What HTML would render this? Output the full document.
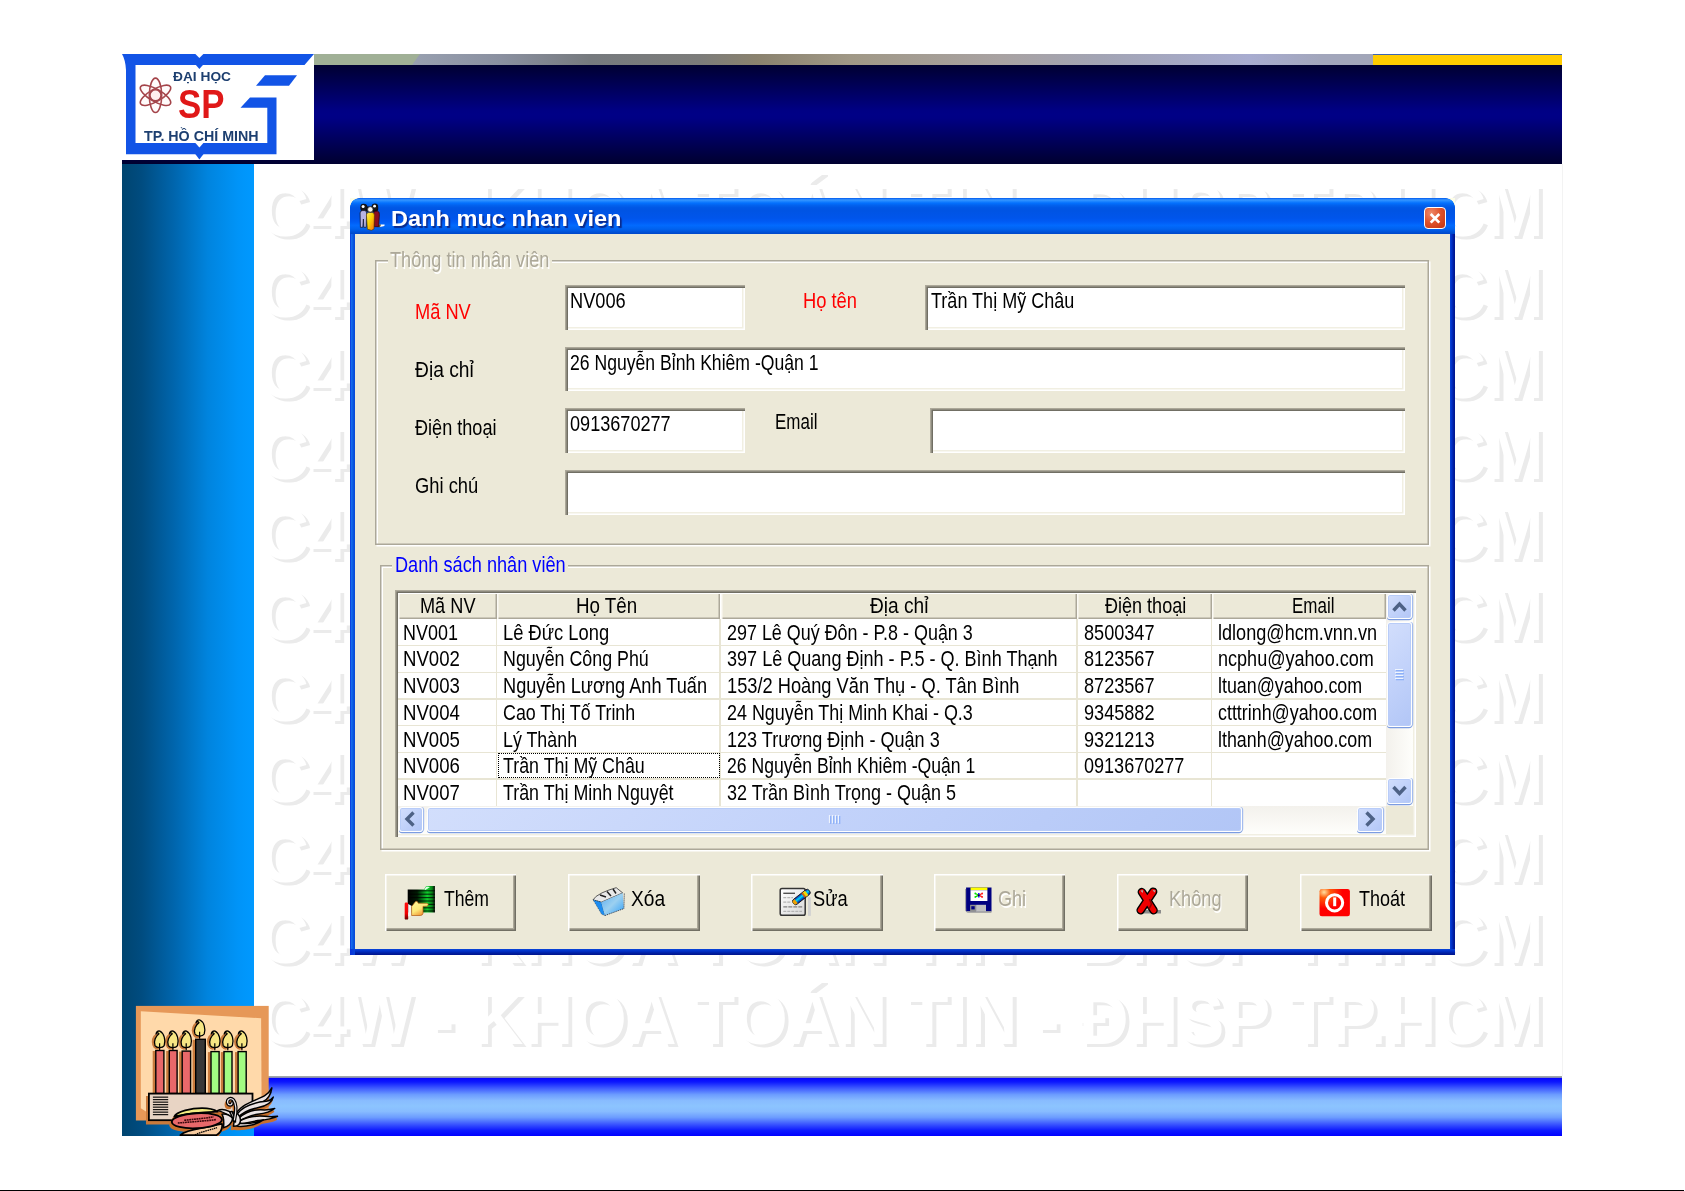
<!DOCTYPE html>
<html lang="vi"><head><meta charset="utf-8"><title>Danh muc nhan vien</title>
<style>
html,body{margin:0;padding:0;background:#fff;}
body{width:1685px;height:1191px;position:relative;overflow:hidden;font-family:"Liberation Sans",sans-serif;}
.a{position:absolute;}
.txt{position:absolute;left:0;top:0;width:1685px;height:1191px;will-change:transform;}
.t{position:absolute;white-space:nowrap;transform-origin:0 0;display:block;}
.wm{position:absolute;left:259px;white-space:nowrap;transform-origin:0 0;font-size:72px;line-height:72px;color:#fff;font-weight:bold;text-shadow:4px 3px 0 #ebebeb;font-family:"Liberation Sans",sans-serif;}
.tb{position:absolute;background:#fff;box-shadow:inset 1.5px 1.5px 0 #aca899,inset 3px 3px 0 #716f64,inset -1.5px -1.5px 0 #fff,inset -3px -3px 0 #f1efe2;}
.gb{position:absolute;box-shadow:inset 0 0 0 1.5px #aca899,inset 3px 3px 0 0 #fff,1.5px 1.5px 0 0 #fff;}
.btn{position:absolute;background:#ece9d8;box-shadow:inset 1.5px 1.5px 0 #fff,inset -1.5px -1.5px 0 #716f64,inset -3px -3px 0 #aca899;}
.hc{position:absolute;top:593.5px;height:25.8px;background:#ece9d8;box-shadow:inset 1.5px 0 0 #fbfaf4,inset -1.5px -1.5px 0 #aca899;}
.vl{position:absolute;top:619.3px;width:1.5px;height:186.5px;background:#e8e5d4;}
.hl{position:absolute;left:398px;width:988px;height:1.5px;background:#e8e5d4;}
.sb{position:absolute;background:linear-gradient(135deg,#d2defc,#c2d2fa 50%,#b2c6f6);border:1px solid #fff;border-radius:3px;box-shadow:inset 0 0 0 1px #b8ccf8, 0 1.3px 0.6px #7c9ce0, 1.2px 0 0.6px #a4bcee;box-sizing:border-box;}
</style></head>
<body>

<!-- top strip -->
<div class="a" style="left:412px;top:54px;width:961px;height:11px;background:linear-gradient(to right,#98a0b0 0.0%,#8a90a0 9.2%,#767a7e 18.5%,#7c7c7a 30.0%,#8a826e 35.9%,#a09886 45.6%,#a8a2a2 61.2%,#a2a4b4 71.6%,#a8acd0 87.2%,#a2a6bc 94.5%,#a2a6b8 100.0%);"></div>
<svg class="a" style="left:314px;top:54px" width="110" height="11" viewBox="0 0 110 11"><path d="M0 0 H106 L98 11 H0 Z" fill="#a0b096"/></svg>
<div class="a" style="left:1373px;top:54px;width:189px;height:11px;background:#ffcc00;border-top:1px solid #3c64b4;box-sizing:border-box;"></div>
<!-- navy header band -->
<div class="a" style="left:122px;top:65px;width:1440px;height:99px;background:linear-gradient(to bottom,#000032 0%,#00003c 6%,#000084 46%,#000086 50%,#000084 54%,#00003a 94%,#000030 100%);"></div>
<!-- left sidebar -->
<div class="a" style="left:122px;top:164px;width:132px;height:972px;background:linear-gradient(to right,#00446f 0%,#004c80 15%,#0066ae 40%,#0084de 65%,#0094f8 88%,#0099ff 100%);"></div>
<!-- bottom bar -->
<div class="a" style="left:254px;top:1076px;width:1308px;height:60px;background:linear-gradient(to bottom,#a0a6aa 0%,#a0a6aa 2.2%,#0404ff 4%,#0c18ff 10%,#3c58ff 20%,#6c9cff 31%,#88bcff 41%,#8cc4ff 50%,#88bcff 59%,#6c9cff 69%,#3c58ff 80%,#0c18ff 91%,#0000ff 100%);"></div>
<div class="a" style="left:1562px;top:164px;width:1px;height:912px;background:#f3f3f3;"></div>
<!-- bottom black rule -->
<div class="a" style="left:0;top:1189.5px;width:1684px;height:1.5px;background:#000;"></div>

<svg class="a" style="left:122px;top:54px" width="192" height="106" viewBox="122 54 192 106">
<rect x="122" y="54" width="192" height="106" fill="#fff"/>
<g fill="#1254e6">
<path d="M122 54 L314 54 L304.5 65 L135.5 65 L135.5 143 L267.3 143 L267.3 107.8 L240.5 107.8 L250 97.4 L276.5 97.4 L276.5 154.2 L126 154.2 L126 70 Q125.5 60 122 54 Z"/>
<path d="M265 75.2 L297 75.2 L289 85.7 L256 85.7 Z"/>
<path d="M195 64 L199.4 69 L203.8 64 Z"/>
<path d="M194.5 153 L199.4 159.5 L204.3 153 Z"/>
</g>
<path d="M195.4 54 L199.4 58 L203.4 54 Z" fill="#fff"/>
<path d="M195.4 143 L199.4 147.5 L203.4 143 Z" fill="#fff"/>
<g fill="rgba(255,200,200,0.07)" stroke="#a4444a" stroke-width="1.6">
<ellipse cx="155.5" cy="95.3" rx="6.2" ry="17.2"/>
<ellipse cx="155.5" cy="95.3" rx="6.2" ry="17.2" transform="rotate(60 155.5 95.3)"/>
<ellipse cx="155.5" cy="95.3" rx="6.2" ry="17.2" transform="rotate(-60 155.5 95.3)"/>
<circle cx="155.5" cy="95.3" r="5.6"/>
</g>
</svg>
<div class="wm" style="top:175.4px;transform:scaleX(0.9576);">C4W - KHOA TOÁN TIN - ĐHSP TP.HCM</div>
<div class="wm" style="top:256.1px;transform:scaleX(0.9576);">C4W - KHOA TOÁN TIN - ĐHSP TP.HCM</div>
<div class="wm" style="top:336.8px;transform:scaleX(0.9576);">C4W - KHOA TOÁN TIN - ĐHSP TP.HCM</div>
<div class="wm" style="top:417.5px;transform:scaleX(0.9576);">C4W - KHOA TOÁN TIN - ĐHSP TP.HCM</div>
<div class="wm" style="top:498.3px;transform:scaleX(0.9576);">C4W - KHOA TOÁN TIN - ĐHSP TP.HCM</div>
<div class="wm" style="top:579.0px;transform:scaleX(0.9576);">C4W - KHOA TOÁN TIN - ĐHSP TP.HCM</div>
<div class="wm" style="top:659.7px;transform:scaleX(0.9576);">C4W - KHOA TOÁN TIN - ĐHSP TP.HCM</div>
<div class="wm" style="top:740.5px;transform:scaleX(0.9576);">C4W - KHOA TOÁN TIN - ĐHSP TP.HCM</div>
<div class="wm" style="top:821.2px;transform:scaleX(0.9576);">C4W - KHOA TOÁN TIN - ĐHSP TP.HCM</div>
<div class="wm" style="top:901.9px;transform:scaleX(0.9576);">C4W - KHOA TOÁN TIN - ĐHSP TP.HCM</div>
<div class="wm" style="top:982.7px;transform:scaleX(0.9576);">C4W - KHOA TOÁN TIN - ĐHSP TP.HCM</div>
<svg class="a" style="left:130px;top:1000px" width="160" height="135.8" viewBox="130 1000 160 135.8" ><rect x="135.9" y="1005.9" width="132.8" height="114.6" fill="#e69858"/><path d="M140.8 1011.2 L261.1 1018.2 L261.6 1104 L150 1114 L140.8 1108.2 Z" fill="#ffd9aa"/><path d="M146 1096 H150 V1121 H253 V1124.6 H146 Z" fill="#c87a3c"/><rect x="152.7" y="1051.0" width="3" height="42.5" fill="#c87a3c"/><rect x="155.8" y="1050.5" width="8.1" height="43.0" fill="#e8686a" stroke="#000" stroke-width="1.4"/><rect x="166.2" y="1051.0" width="3" height="42.5" fill="#c87a3c"/><rect x="169.3" y="1050.5" width="7.8" height="43.0" fill="#e8686a" stroke="#000" stroke-width="1.4"/><rect x="179.1" y="1051.6" width="3" height="41.9" fill="#c87a3c"/><rect x="182.2" y="1051.1" width="8.4" height="42.4" fill="#e8686a" stroke="#000" stroke-width="1.4"/><rect x="192.6" y="1039.8" width="3" height="53.7" fill="#c87a3c"/><rect x="195.7" y="1039.3" width="9.6" height="54.2" fill="#383838" stroke="#000" stroke-width="1.4"/><rect x="207.9" y="1052.1" width="3" height="41.4" fill="#c87a3c"/><rect x="211.0" y="1051.6" width="8.1" height="41.9" fill="#a2fb82" stroke="#000" stroke-width="1.4"/><rect x="220.9" y="1052.1" width="3" height="41.4" fill="#c87a3c"/><rect x="224.0" y="1051.6" width="8.0" height="41.9" fill="#a2fb82" stroke="#000" stroke-width="1.4"/><rect x="235.0" y="1052.1" width="3" height="41.4" fill="#c87a3c"/><rect x="238.1" y="1051.6" width="8.1" height="41.9" fill="#a2fb82" stroke="#000" stroke-width="1.4"/><ellipse cx="157.4" cy="1041.7" rx="5.6" ry="8" fill="#c87a3c"/><ellipse cx="170.7" cy="1041.7" rx="5.6" ry="8" fill="#c87a3c"/><ellipse cx="184.0" cy="1041.7" rx="5.6" ry="8" fill="#c87a3c"/><ellipse cx="197.4" cy="1030.3" rx="5.6" ry="8" fill="#c87a3c"/><ellipse cx="212.6" cy="1041.7" rx="5.6" ry="8" fill="#c87a3c"/><ellipse cx="225.6" cy="1041.7" rx="5.6" ry="8" fill="#c87a3c"/><ellipse cx="239.7" cy="1041.7" rx="5.6" ry="8" fill="#c87a3c"/><path d="M159.9 1031.2 C164.1 1033.2 165.9 1040.3 164.2 1045.6 C162.6 1048.4 156.6 1048.4 155.0 1045.6 C153.1 1041.2 156.1 1035.8 159.0 1033.8 C158.0 1032.4 156.8 1032.8 156.0 1034.0 C156.4 1031.4 158.4 1030.6 159.9 1031.2 Z" fill="#f6e684" stroke="#000" stroke-width="1.3" stroke-linejoin="round"/><path d="M159.6 1043.3 V1050.3" stroke="#000" stroke-width="1.2"/><path d="M173.2 1031.2 C177.4 1033.2 179.2 1040.3 177.5 1045.6 C175.9 1048.4 169.9 1048.4 168.3 1045.6 C166.4 1041.2 169.4 1035.8 172.3 1033.8 C171.3 1032.4 170.1 1032.8 169.3 1034.0 C169.7 1031.4 171.7 1030.6 173.2 1031.2 Z" fill="#f6e684" stroke="#000" stroke-width="1.3" stroke-linejoin="round"/><path d="M172.9 1043.3 V1050.3" stroke="#000" stroke-width="1.2"/><path d="M186.5 1031.2 C190.7 1033.2 192.5 1040.3 190.8 1045.6 C189.2 1048.4 183.2 1048.4 181.6 1045.6 C179.7 1041.2 182.7 1035.8 185.6 1033.8 C184.6 1032.4 183.4 1032.8 182.6 1034.0 C183.0 1031.4 185.0 1030.6 186.5 1031.2 Z" fill="#f6e684" stroke="#000" stroke-width="1.3" stroke-linejoin="round"/><path d="M186.2 1043.3 V1050.3" stroke="#000" stroke-width="1.2"/><path d="M199.9 1020.0 C204.1 1022.0 205.9 1028.9 204.2 1034.0 C202.6 1036.8 196.6 1036.8 195.0 1034.0 C193.1 1029.7 196.1 1024.5 199.0 1022.6 C198.0 1021.2 196.8 1021.6 196.0 1022.8 C196.4 1020.2 198.4 1019.4 199.9 1020.0 Z" fill="#f6e684" stroke="#000" stroke-width="1.3" stroke-linejoin="round"/><path d="M199.6 1031.7 V1038.7" stroke="#000" stroke-width="1.2"/><path d="M215.1 1031.2 C219.3 1033.2 221.1 1040.3 219.4 1045.6 C217.8 1048.4 211.8 1048.4 210.2 1045.6 C208.3 1041.2 211.3 1035.8 214.2 1033.8 C213.2 1032.4 212.0 1032.8 211.2 1034.0 C211.6 1031.4 213.6 1030.6 215.1 1031.2 Z" fill="#f6e684" stroke="#000" stroke-width="1.3" stroke-linejoin="round"/><path d="M214.8 1043.3 V1050.3" stroke="#000" stroke-width="1.2"/><path d="M228.1 1031.2 C232.3 1033.2 234.1 1040.3 232.4 1045.6 C230.8 1048.4 224.8 1048.4 223.2 1045.6 C221.3 1041.2 224.3 1035.8 227.2 1033.8 C226.2 1032.4 225.0 1032.8 224.2 1034.0 C224.6 1031.4 226.6 1030.6 228.1 1031.2 Z" fill="#f6e684" stroke="#000" stroke-width="1.3" stroke-linejoin="round"/><path d="M227.8 1043.3 V1050.3" stroke="#000" stroke-width="1.2"/><path d="M242.2 1031.2 C246.4 1033.2 248.2 1040.3 246.5 1045.6 C244.9 1048.4 238.9 1048.4 237.3 1045.6 C235.4 1041.2 238.4 1035.8 241.3 1033.8 C240.3 1032.4 239.1 1032.8 238.3 1034.0 C238.7 1031.4 240.7 1030.6 242.2 1031.2 Z" fill="#f6e684" stroke="#000" stroke-width="1.3" stroke-linejoin="round"/><path d="M241.9 1043.3 V1050.3" stroke="#000" stroke-width="1.2"/><rect x="148.9" y="1093.6" width="103.6" height="26.6" fill="#e8d4c4" stroke="#000" stroke-width="1.8"/><rect x="152.9" y="1096.6" width="15.3" height="1.1" fill="#000"/><rect x="152.9" y="1099.1" width="15.3" height="1.1" fill="#000"/><rect x="152.9" y="1101.6" width="15.3" height="1.1" fill="#000"/><rect x="152.9" y="1104.1" width="15.3" height="1.1" fill="#000"/><rect x="152.9" y="1106.6" width="15.3" height="1.1" fill="#000"/><rect x="152.9" y="1109.1" width="15.3" height="1.1" fill="#000"/><rect x="152.9" y="1111.6" width="15.3" height="1.1" fill="#000"/><rect x="152.9" y="1114.1" width="15.3" height="1.1" fill="#000"/><g transform="translate(165 1080) scale(0.07123)"><g transform="translate(-22 40)" fill="#c8702c" stroke="#c8702c" stroke-width="30" stroke-linejoin="round"><path d="M 1000 470 C 1080 330 1300 280 1400 220 C 1450 190 1480 150 1500 110 C 1490 200 1440 280 1380 300 C 1250 340 1100 400 1010 500 Z"/><path d="M 1000 490 C 1100 350 1300 310 1420 300 C 1470 290 1500 270 1520 240 C 1500 330 1400 370 1300 390 C 1200 410 1080 460 1010 540 Z"/><path d="M 1030 540 C 1150 430 1300 410 1400 420 C 1460 420 1500 410 1540 400 C 1480 450 1380 470 1300 480 C 1200 500 1100 540 1040 580 Z"/><path d="M 1040 580 C 1150 520 1300 500 1400 510 C 1480 520 1540 515 1580 510 C 1500 550 1400 560 1300 570 C 1200 590 1100 610 1050 620 Z"/><path d="M 1000 600 C 1100 620 1250 610 1380 560 C 1300 620 1150 660 1020 650 Z"/><path d="M 930 450 C 1000 440 1050 480 1060 560 C 1060 620 1020 650 960 650 C 980 580 980 520 930 450 Z"/><path d="M 960 480 C 900 420 800 400 735 430 C 800 440 860 470 930 520 Z"/><path d="M 800 480 C 860 470 930 500 950 540 C 940 600 900 650 820 670 C 830 600 830 540 800 480 Z"/><path d="M 940 440 C 960 480 990 540 990 590 L 960 580 C 950 530 930 480 910 450 Z"/><path d="M 130 515 C 160 440 380 395 520 395 C 620 395 700 420 740 445 C 600 450 300 470 130 515 Z"/><path d="M 215 775 C 300 700 450 690 600 660 C 700 640 770 620 800 615 C 810 680 780 740 720 775 Z"/><ellipse cx="447" cy="572" rx="352" ry="105" transform="rotate(-3 447 572)"/><path d="M 975 560 C 1000 450 1000 330 960 280 C 920 240 870 270 880 320 C 890 360 940 360 940 320" fill="none" stroke-width="40"/></g><path d="M 215 775 C 300 700 450 690 600 660 C 700 640 770 620 800 615 C 810 680 780 740 720 775 Z" fill="#f8cca0" stroke="#000" stroke-width="24" stroke-linejoin="round"/><path d="M 420 772 C 520 722 640 702 730 668" fill="none" stroke="#000" stroke-width="18" stroke-dasharray="22 9"/><path d="M 130 515 C 160 440 380 395 520 395 C 620 395 700 420 740 445 C 600 450 300 470 130 515 Z" fill="#f4ec80" stroke="#000" stroke-width="24" stroke-linejoin="round"/><ellipse cx="447" cy="572" rx="352" ry="105" transform="rotate(-3 447 572)" fill="#e8686a" stroke="#000" stroke-width="26"/><path d="M 180 604 C 360 590 560 575 720 556 M 270 566 C 420 550 560 538 680 518" fill="none" stroke="#3a080c" stroke-width="22" stroke-dasharray="26 8"/><path d="M 1000 470 C 1080 330 1300 280 1400 220 C 1450 190 1480 150 1500 110 C 1490 200 1440 280 1380 300 C 1250 340 1100 400 1010 500 Z" fill="#ece4e4" stroke="#000" stroke-width="21" stroke-linejoin="round"/><path d="M 1000 490 C 1100 350 1300 310 1420 300 C 1470 290 1500 270 1520 240 C 1500 330 1400 370 1300 390 C 1200 410 1080 460 1010 540 Z" fill="#ece4e4" stroke="#000" stroke-width="21" stroke-linejoin="round"/><path d="M 1030 540 C 1150 430 1300 410 1400 420 C 1460 420 1500 410 1540 400 C 1480 450 1380 470 1300 480 C 1200 500 1100 540 1040 580 Z" fill="#ece4e4" stroke="#000" stroke-width="21" stroke-linejoin="round"/><path d="M 1040 580 C 1150 520 1300 500 1400 510 C 1480 520 1540 515 1580 510 C 1500 550 1400 560 1300 570 C 1200 590 1100 610 1050 620 Z" fill="#ece4e4" stroke="#000" stroke-width="21" stroke-linejoin="round"/><path d="M 1000 600 C 1100 620 1250 610 1380 560 C 1300 620 1150 660 1020 650 Z" fill="#ece4e4" stroke="#000" stroke-width="21" stroke-linejoin="round"/><path d="M 930 450 C 1000 440 1050 480 1060 560 C 1060 620 1020 650 960 650 C 980 580 980 520 930 450 Z" fill="#ece4e4" stroke="#000" stroke-width="21" stroke-linejoin="round"/><path d="M 960 480 C 900 420 800 400 735 430 C 800 440 860 470 930 520 Z" fill="#ece4e4" stroke="#000" stroke-width="21" stroke-linejoin="round"/><path d="M 800 480 C 860 470 930 500 950 540 C 940 600 900 650 820 670 C 830 600 830 540 800 480 Z" fill="#ece4e4" stroke="#000" stroke-width="21" stroke-linejoin="round"/><path d="M 940 440 C 960 480 990 540 990 590 L 960 580 C 950 530 930 480 910 450 Z" fill="#ece4e4" stroke="#000" stroke-width="21" stroke-linejoin="round"/><path d="M 975 560 C 1000 450 1000 330 960 280 C 920 240 870 270 880 320 C 890 360 940 360 940 320" fill="none" stroke="#000" stroke-width="50" stroke-linecap="round"/><path d="M 975 560 C 1000 450 1000 330 960 280 C 920 240 870 270 880 320 C 890 360 940 360 940 320" fill="none" stroke="#ece4e4" stroke-width="17" stroke-linecap="round"/></g></svg>


<!-- dialog window -->
<div class="a" style="left:350px;top:198px;width:1105px;height:756.5px;background:#ece9d8;"></div>
<div class="a" style="left:350px;top:198px;width:1105px;height:36px;border-radius:9px 9px 0 0;background:linear-gradient(to bottom,#0058ee 0%,#3593ff 5%,#288eff 8%,#127dff 11%,#036ffc 15%,#0262ee 20%,#0057e5 27%,#0054e3 34%,#0055eb 56%,#005bf5 66%,#026afe 76%,#0062ef 86%,#0054dc 93%,#0046c8 100%);"></div>
<div class="a" style="left:350px;top:198px;width:9px;height:9px;background:radial-gradient(circle at 100% 100%,rgba(0,0,0,0) 8.6px,#fdfde6 9px);"></div>
<div class="a" style="left:1446px;top:198px;width:9px;height:9px;background:radial-gradient(circle at 0 100%,rgba(0,0,0,0) 8.6px,#fdfde6 9px);"></div>
<div class="a" style="left:350px;top:234px;width:5px;height:720.5px;background:linear-gradient(to right,#0831d9 0%,#166aee 30%,#0855dd 70%,#0a45d8 100%);"></div>
<div class="a" style="left:1450px;top:234px;width:5px;height:720.5px;background:linear-gradient(to right,#0a45d8 0%,#0030c8 35%,#001ea0 70%,#00138c 100%);"></div>
<div class="a" style="left:350px;top:949px;width:1105px;height:5.5px;background:linear-gradient(to bottom,#0a45d8 0%,#0030c8 35%,#001ea0 70%,#00138c 100%);"></div>
<div class="a" style="left:350px;top:949px;width:5px;height:5.5px;background:linear-gradient(to right,#0831d9,#0a45d8);"></div>
<!-- close button -->
<div class="a" style="left:1423.5px;top:206.5px;width:22px;height:22.5px;box-sizing:border-box;border:1.3px solid #fff;border-radius:4px;background:radial-gradient(circle at 30% 25%,#ee8a6a 0%,#e0532c 45%,#c43210 100%);"></div>
<svg class="a" style="left:1423.5px;top:206.5px" width="22" height="22.5" viewBox="0 0 22 22.5"><path d="M6.7 7 L15.3 15.6 M15.3 7 L6.7 15.6" stroke="#fff" stroke-width="2.7" stroke-linecap="butt"/></svg>
<svg class="a" style="left:356px;top:202px" width="32" height="32" viewBox="356 202 32 32" ><defs><linearGradient id="gy" x1="0" y1="0" x2="1" y2="1"><stop offset="0" stop-color="#f8e870"/><stop offset="0.45" stop-color="#fcd400"/><stop offset="1" stop-color="#f86818"/></linearGradient></defs><path d="M378 225 L381 224.4 L384.6 224.6 L384.4 226 L380 227 Z" fill="#fff"/><path d="M377.5 224.6 L381 224.6 L380 227.2 L377 227 Z" fill="#5a5230"/><path d="M360.4 208 Q360 203.6 363.8 203.8 Q367 204 367.4 206.6 L371.6 206.4 Q372 203.6 375 203.6 Q378.4 203.8 378.2 207.6 Q378.6 211.6 376 212 L362 211.6 Q360.4 211 360.4 208 Z" fill="#0c0c14"/><path d="M360.1 213 Q360 210.8 362.5 210.6 L365 210.6 Q366.8 211 366.6 214 L366.2 227.3 L363.8 227.3 L363.4 219 L362.8 227.3 L360.4 227.3 Z" fill="#b8b4e4" stroke="#101020" stroke-width="0.7"/><circle cx="363.6" cy="207.2" r="2.9" fill="#181818"/><circle cx="363.1" cy="206.6" r="1.5" fill="#fff"/><path d="M373.6 213.4 Q373.6 211.2 375.6 211.2 L377.6 211.2 Q379.6 211.6 379.4 214.6 L378.6 226.7 L374.2 226.7 Z" fill="#8a0c20" stroke="#300008" stroke-width="0.7"/><circle cx="374.9" cy="206.9" r="2.9" fill="#181818"/><circle cx="374.6" cy="206.2" r="1.4" fill="#fff"/><path d="M366.4 215 Q366.4 212.4 369 212.4 L372 212.4 Q374.4 212.6 374.4 215.4 L374 229 L371.4 230.3 L367.4 229.2 Z" fill="url(#gy)" stroke="#503000" stroke-width="0.6"/><circle cx="370.3" cy="209.4" r="2.7" fill="#f4f4f4" stroke="#303030" stroke-width="0.7"/></svg>


<div class="gb" style="left:374.9px;top:260.1px;width:1054.6px;height:284.5px;"></div>
<div class="a" style="left:388px;top:256px;width:164px;height:10px;background:#ece9d8;"></div>
<div class="gb" style="left:379.8px;top:564.7px;width:1049.7px;height:285px;"></div>
<div class="a" style="left:392px;top:560px;width:176px;height:10px;background:#ece9d8;"></div>

<div class="tb" style="left:565px;top:285.4px;width:180.3px;height:44.4px;"></div>
<div class="tb" style="left:925px;top:285.4px;width:479.5px;height:44.4px;"></div>
<div class="tb" style="left:565px;top:346.7px;width:839.5px;height:44.2px;"></div>
<div class="tb" style="left:565px;top:408.3px;width:180.3px;height:44.4px;"></div>
<div class="tb" style="left:930px;top:408.3px;width:475px;height:45px;"></div>
<div class="tb" style="left:565px;top:470px;width:839.5px;height:44.6px;"></div>

<div class="tb" style="left:395px;top:590.4px;width:1021.3px;height:246.2px;"></div>
<div class="hc" style="left:398px;width:98.7px;"></div>
<div class="hc" style="left:496.7px;width:223.8px;"></div>
<div class="hc" style="left:720.5px;width:356.8px;"></div>
<div class="hc" style="left:1077.3px;width:134.7px;"></div>
<div class="hc" style="left:1212px;width:174px;"></div>
<div class="vl" style="left:495.5px;"></div><div class="vl" style="left:719.3px;"></div><div class="vl" style="left:1076.1px;"></div><div class="vl" style="left:1210.8px;"></div><div class="hl" style="top:644.85px;"></div><div class="hl" style="top:671.55px;"></div><div class="hl" style="top:698.25px;"></div><div class="hl" style="top:724.95px;"></div><div class="hl" style="top:751.65px;"></div><div class="hl" style="top:778.35px;"></div>
<!-- focus rect -->
<div class="a" style="left:498px;top:753px;width:221.5px;height:24.5px;box-sizing:border-box;border:1.5px dotted #000;"></div>
<!-- scrollbars -->
<div class="a" style="left:1385.5px;top:593.5px;width:27.8px;height:212.5px;background:linear-gradient(to right,#f3f1ec,#fefefb);"></div>
<div class="a" style="left:398px;top:805.6px;width:987.5px;height:28.6px;background:linear-gradient(to bottom,#f3f1ec,#fefefb);"></div>
<div class="a" style="left:1385.5px;top:805.6px;width:27.8px;height:28.6px;background:#ece9d8;"></div>
<div class="sb" style="left:1386.6px;top:594px;width:25.4px;height:24.5px;"></div>
<div class="sb" style="left:1386.6px;top:622px;width:25.4px;height:105px;"></div>
<div class="sb" style="left:1386.6px;top:778px;width:25.4px;height:25.5px;"></div>
<div class="sb" style="left:398.5px;top:807px;width:24px;height:25px;"></div>
<div class="sb" style="left:427px;top:807px;width:814.5px;height:25px;"></div>
<div class="sb" style="left:1357px;top:807px;width:25.5px;height:25px;"></div>
<svg class="a" style="left:1386px;top:593px" width="27" height="241" viewBox="0 0 27 241" fill="none" stroke="#4d6185" stroke-width="3.4" stroke-linecap="butt" stroke-linejoin="miter">
<path d="M7.5 17.5 L13.5 11 L19.5 17.5"/>
<path d="M7.5 194 L13.5 200.5 L19.5 194"/>
<g stroke="#eef4fe" stroke-width="1.2"><path d="M9 76.5 H17 M9 79.5 H17 M9 82.5 H17 M9 85.5 H17"/></g>
<g stroke="#8cb0f8" stroke-width="1.2"><path d="M10 77.7 H18 M10 80.7 H18 M10 83.7 H18 M10 86.7 H18"/></g>
</svg>
<svg class="a" style="left:398px;top:806px" width="988" height="28" viewBox="0 0 988 28" fill="none" stroke="#4d6185" stroke-width="3.4">
<path d="M15.5 6.5 L9 13 L15.5 19.5"/>
<path d="M968.5 6.5 L975 13 L968.5 19.5"/>
<g stroke="#eef4fe" stroke-width="1.2"><path d="M431.5 9 V17 M434.5 9 V17 M437.5 9 V17 M440.5 9 V17"/></g>
<g stroke="#8cb0f8" stroke-width="1.2"><path d="M432.7 10 V18 M435.7 10 V18 M438.7 10 V18 M441.7 10 V18"/></g>
</svg>
<div class="btn" style="left:384.5px;top:874.2px;width:131.8px;height:57px;"></div>
<div class="btn" style="left:567.8px;top:874.2px;width:131.8px;height:57px;"></div>
<div class="btn" style="left:751.3px;top:874.2px;width:131.8px;height:57px;"></div>
<div class="btn" style="left:933.5px;top:874.2px;width:131.8px;height:57px;"></div>
<div class="btn" style="left:1116.5px;top:874.2px;width:131.8px;height:57px;"></div>
<div class="btn" style="left:1299.8px;top:874.2px;width:131.8px;height:57px;"></div>
<svg class="a" style="left:400px;top:880px" width="960" height="44" viewBox="400 880 960 44" ><defs><linearGradient id="gg" x1="0" y1="0" x2="1" y2="0"><stop offset="0" stop-color="#000"/><stop offset="0.35" stop-color="#001c04"/><stop offset="0.72" stop-color="#0ed02c"/><stop offset="0.9" stop-color="#088018"/><stop offset="1" stop-color="#000"/></linearGradient><linearGradient id="gh" x1="0" y1="0" x2="0.6" y2="1"><stop offset="0" stop-color="#fff89a"/><stop offset="0.6" stop-color="#fce878"/><stop offset="1" stop-color="#f09030"/></linearGradient><linearGradient id="gr" x1="0" y1="0" x2="0" y2="1"><stop offset="0" stop-color="#ff1010"/><stop offset="0.65" stop-color="#f00000"/><stop offset="1" stop-color="#600000"/></linearGradient><linearGradient id="gb" x1="0" y1="0" x2="1" y2="1"><stop offset="0" stop-color="#58acf0"/><stop offset="0.5" stop-color="#9cd0f0"/><stop offset="1" stop-color="#30a0f8"/></linearGradient><linearGradient id="gp" x1="0" y1="0" x2="1" y2="1"><stop offset="0" stop-color="#fff"/><stop offset="1" stop-color="#d8d8d8"/></linearGradient><linearGradient id="gpen" x1="0" y1="0" x2="0" y2="1"><stop offset="0" stop-color="#0818b0"/><stop offset="0.45" stop-color="#00d8f8"/><stop offset="1" stop-color="#0010a0"/></linearGradient><radialGradient id="gx" cx="0.15" cy="0.12" r="0.6"><stop offset="0" stop-color="#ffe0a0"/><stop offset="0.35" stop-color="#ff5808"/><stop offset="1" stop-color="#ff0000"/></radialGradient></defs><path d="M407.7 889.5 H424 L426.2 885.9 H434.9 V912.6 H407.7 Z" fill="url(#gg)"/><path d="M409 890.8 H435" stroke="#000" stroke-width="1.1" opacity="0.75"/><path d="M409 894.2 H435" stroke="#000" stroke-width="1.1" opacity="0.75"/><path d="M409 897.6 H435" stroke="#000" stroke-width="1.1" opacity="0.75"/><path d="M409 901.0 H435" stroke="#000" stroke-width="1.1" opacity="0.75"/><path d="M409 904.4 H435" stroke="#000" stroke-width="1.1" opacity="0.75"/><path d="M409 907.8 H435" stroke="#000" stroke-width="1.1" opacity="0.75"/><path d="M409 911.0 H435" stroke="#000" stroke-width="1.1" opacity="0.75"/><path d="M424.2 889.6 L426.4 886.4 L430 887 L425.5 890 Z" fill="#d8ffe0"/><rect x="404.7" y="902.6" width="3.5" height="17" rx="1.2" fill="url(#gr)"/><path d="M408.2 904 L411.8 906 L411.8 915 L408.2 916.5 Z" fill="#f4f4f4"/><path d="M411.6 906.5 L415.5 901.6 Q417 900.8 417.8 902.2 L418.3 903.2 L427 903.2 Q428.2 903.4 428.2 904.6 Q428.2 906 427 906.2 L423 906.4 L423 913.4 Q422.6 915.4 420.5 915.5 L411.6 915.5 Z" fill="url(#gh)" stroke="#b05810" stroke-width="0.7"/><path d="M593.1 899.8 L596.1 896.4 L602.1 892.8 L609 890 L616.2 887.7 L622.7 892.9 L601.3 902.2 Z" fill="#e8e8e8" stroke="#484848" stroke-width="0.9"/><path d="M600 895 L606 897 M607 891.5 L611 896 M613 889 L616 893.5" stroke="#202020" stroke-width="1.5"/><path d="M593.1 899.8 L601.3 902.2 L605 915.5 L601.7 914.3 Z" fill="#1c8cf0" stroke="#203040" stroke-width="0.6" stroke-dasharray="1 1"/><path d="M601.3 902.2 L622.7 892.9 L623.9 908.6 L605 915.5 Z" fill="url(#gb)"/><path d="M605 915.5 L623.9 908.6 L624.3 893.5" stroke="#303848" stroke-width="0.9" fill="none" stroke-dasharray="1.2 0.8"/><rect x="808" y="897.3" width="2.9" height="18.6" fill="#d2d2d2"/><rect x="780.2" y="888.6" width="25" height="26.6" rx="1.8" fill="url(#gp)" stroke="#343434" stroke-width="1.5"/><path d="M783.3 893.3 H795" stroke="#505050" stroke-width="1.4"/><path d="M783.3 897.7 H793 M783.3 902.2 H791 M783.3 911.4 H802" stroke="#b4b4b4" stroke-width="1.3" stroke-dasharray="3 1"/><path d="M783.3 906.8 H802.2" stroke="#808080" stroke-width="1.3" stroke-dasharray="4 1"/><g transform="rotate(-38.3 801.4 897)"><rect x="791.2" y="894" width="20.4" height="6" rx="2.6" fill="url(#gpen)" stroke="#181008" stroke-width="0.8"/><path d="M791.4 895 L794.6 894.3 L794.6 899.7 L791.4 899 Z" fill="#f0a000"/><rect x="805.2" y="894.3" width="3" height="5.4" fill="#f8d800"/><rect x="803.6" y="894.3" width="1.6" height="5.4" fill="#e06000"/></g><path d="M965 889 H966.1 V911.4 H991.5 V912.6 H967 L965 910.4 Z" fill="#a4a4a4"/><rect x="966.1" y="887.5" width="25.4" height="23.9" fill="#000080"/><rect x="967.6" y="911.2" width="23.6" height="1.4" fill="#9c9c9c"/><path d="M965.2 908.6 L966.1 908.6 L966.1 911.4 L968.4 911.4 L968.4 912.6 L967 912.6 Z" fill="#b0b0b0"/><rect x="970.5" y="887.5" width="16.9" height="2.7" fill="#ffff00"/><rect x="970.5" y="890.2" width="16.9" height="10.8" fill="#fff"/><path d="M975.3 893.5 L978.8 895.2 L975.3 896.9" stroke="#00e000" stroke-width="1.3" fill="none"/><path d="M982.2 893.5 L978.8 895.2 L982.2 896.9" stroke="#ff2020" stroke-width="1.3" fill="none"/><path d="M978.8 893 V897.4" stroke="#2020ff" stroke-width="1.6"/><circle cx="975.3" cy="893.5" r="0.9" fill="#00e000"/><circle cx="975.3" cy="896.9" r="0.9" fill="#00e000"/><circle cx="982.2" cy="893.5" r="0.9" fill="#ff2020"/><circle cx="982.2" cy="896.9" r="0.9" fill="#ff2020"/><circle cx="978.8" cy="895.2" r="0.8" fill="#000"/><rect x="970.1" y="904.8" width="6" height="6.6" fill="#909090"/><rect x="976.1" y="904.8" width="9.9" height="6.6" fill="#c0c0c0"/><rect x="971.3" y="906.2" width="3.4" height="3.2" fill="#000080"/><path d="M1146 910 H1161 V913.4 H1143 Z" fill="#8c8c8c"/><g stroke-linecap="round" fill="none"><path d="M1141.8 892 L1153.6 910.3 M1153.2 891.6 L1140.6 910.3" stroke="#000" stroke-width="8.4"/><path d="M1141.8 892 L1153.6 910.3 M1153.2 891.6 L1140.6 910.3" stroke="#f00000" stroke-width="5.6"/></g><path d="M1140.4 890.4 L1143.2 890.2 L1142.6 893 Z M1152.6 890 L1155.6 890.4 L1154.4 892.6 Z" fill="#b0b0b0"/><path d="M1149.5 899 L1151.5 904 L1149 909" stroke="#900000" stroke-width="1.6" fill="none"/><rect x="1319.5" y="888.9" width="30.4" height="27.4" rx="2.4" fill="url(#gx)"/><circle cx="1334.6" cy="902.8" r="8.1" fill="none" stroke="#fff" stroke-width="3"/><rect x="1333.2" y="897.4" width="3" height="8.8" fill="#fff"/></svg>

<div class="txt">
<span class="t" style="left:173.20px;top:69.89px;font-size:13.6px;line-height:13.6px;color:#1d3f70;font-weight:bold;transform:scaleX(1.0103);">ĐẠI HỌC</span>
<span class="t" style="left:177.70px;top:84.42px;font-size:40.5px;line-height:40.5px;color:#e01818;font-weight:bold;transform:scaleX(0.8606);">SP</span>
<span class="t" style="left:143.90px;top:127.86px;font-size:15.4px;line-height:15.4px;color:#1d3f70;font-weight:bold;transform:scaleX(0.9264);">TP. HỒ CHÍ MINH</span>
<span class="t" style="left:390.70px;top:207.95px;font-size:21.8px;line-height:21.8px;color:#fff;font-weight:bold;transform:scaleX(1.0813);text-shadow:1.5px 1.5px 1px #0a2a8c;">Danh muc nhan vien</span>
<span class="t" style="left:390.20px;top:249.32px;font-size:22.3px;line-height:22.3px;color:#aca899;transform:scaleX(0.8138);text-shadow:1.5px 1.5px 0 #fff;">Thông tin nhân viên</span>
<span class="t" style="left:395.40px;top:554.42px;font-size:22.3px;line-height:22.3px;color:#0000ff;transform:scaleX(0.8148);">Danh sách nhân viên</span>
<span class="t" style="left:414.50px;top:300.82px;font-size:22.3px;line-height:22.3px;color:#ff0000;transform:scaleX(0.8187);">Mã NV</span>
<span class="t" style="left:803.30px;top:290.22px;font-size:22.3px;line-height:22.3px;color:#ff0000;transform:scaleX(0.8219);">Họ tên</span>
<span class="t" style="left:414.50px;top:359.12px;font-size:22.3px;line-height:22.3px;color:#000;transform:scaleX(0.8627);">Địa chỉ</span>
<span class="t" style="left:414.50px;top:416.92px;font-size:22.3px;line-height:22.3px;color:#000;transform:scaleX(0.8117);">Điện thoại</span>
<span class="t" style="left:774.90px;top:410.72px;font-size:22.3px;line-height:22.3px;color:#000;transform:scaleX(0.7621);">Email</span>
<span class="t" style="left:414.50px;top:474.72px;font-size:22.3px;line-height:22.3px;color:#000;transform:scaleX(0.8237);">Ghi chú</span>
<span class="t" style="left:569.90px;top:290.22px;font-size:22.3px;line-height:22.3px;color:#000;transform:scaleX(0.8169);">NV006</span>
<span class="t" style="left:930.70px;top:290.22px;font-size:22.3px;line-height:22.3px;color:#000;transform:scaleX(0.8087);">Trần Thị Mỹ Châu</span>
<span class="t" style="left:569.90px;top:352.12px;font-size:22.3px;line-height:22.3px;color:#000;transform:scaleX(0.7893);">26 Nguyễn Bỉnh Khiêm -Quận 1</span>
<span class="t" style="left:569.90px;top:413.42px;font-size:22.3px;line-height:22.3px;color:#000;transform:scaleX(0.8120);">0913670277</span>
<span class="t" style="left:419.80px;top:594.72px;font-size:22.3px;line-height:22.3px;color:#000;transform:scaleX(0.8143);">Mã NV</span>
<span class="t" style="left:576.20px;top:594.72px;font-size:22.3px;line-height:22.3px;color:#000;transform:scaleX(0.8416);">Họ Tên</span>
<span class="t" style="left:869.50px;top:594.72px;font-size:22.3px;line-height:22.3px;color:#000;transform:scaleX(0.8583);">Địa chỉ</span>
<span class="t" style="left:1104.50px;top:594.72px;font-size:22.3px;line-height:22.3px;color:#000;transform:scaleX(0.8087);">Điện thoại</span>
<span class="t" style="left:1291.60px;top:594.72px;font-size:22.3px;line-height:22.3px;color:#000;transform:scaleX(0.7621);">Email</span>
<span class="t" style="left:403.30px;top:621.62px;font-size:22.3px;line-height:22.3px;color:#000;transform:scaleX(0.8051);">NV001</span>
<span class="t" style="left:503.10px;top:621.62px;font-size:22.3px;line-height:22.3px;color:#000;transform:scaleX(0.8226);">Lê Đức Long</span>
<span class="t" style="left:726.60px;top:621.62px;font-size:22.3px;line-height:22.3px;color:#000;transform:scaleX(0.8039);">297 Lê Quý Đôn - P.8 - Quận 3</span>
<span class="t" style="left:1083.60px;top:621.62px;font-size:22.3px;line-height:22.3px;color:#000;transform:scaleX(0.8121);">8500347</span>
<span class="t" style="left:1218.20px;top:621.62px;font-size:22.3px;line-height:22.3px;color:#000;transform:scaleX(0.8111);">ldlong@hcm.vnn.vn</span>
<span class="t" style="left:403.30px;top:648.37px;font-size:22.3px;line-height:22.3px;color:#000;transform:scaleX(0.8345);">NV002</span>
<span class="t" style="left:503.10px;top:648.37px;font-size:22.3px;line-height:22.3px;color:#000;transform:scaleX(0.8000);">Nguyễn Công Phú</span>
<span class="t" style="left:726.60px;top:648.37px;font-size:22.3px;line-height:22.3px;color:#000;transform:scaleX(0.8098);">397 Lê Quang Định - P.5 - Q. Bình Thạnh</span>
<span class="t" style="left:1083.60px;top:648.37px;font-size:22.3px;line-height:22.3px;color:#000;transform:scaleX(0.8121);">8123567</span>
<span class="t" style="left:1218.20px;top:648.37px;font-size:22.3px;line-height:22.3px;color:#000;transform:scaleX(0.8095);">ncphu@yahoo.com</span>
<span class="t" style="left:403.30px;top:675.12px;font-size:22.3px;line-height:22.3px;color:#000;transform:scaleX(0.8345);">NV003</span>
<span class="t" style="left:503.10px;top:675.12px;font-size:22.3px;line-height:22.3px;color:#000;transform:scaleX(0.8156);">Nguyễn Lương Anh Tuấn</span>
<span class="t" style="left:726.60px;top:675.12px;font-size:22.3px;line-height:22.3px;color:#000;transform:scaleX(0.8184);">153/2 Hoàng Văn Thụ - Q. Tân Bình</span>
<span class="t" style="left:1083.60px;top:675.12px;font-size:22.3px;line-height:22.3px;color:#000;transform:scaleX(0.8121);">8723567</span>
<span class="t" style="left:1218.20px;top:675.12px;font-size:22.3px;line-height:22.3px;color:#000;transform:scaleX(0.8003);">ltuan@yahoo.com</span>
<span class="t" style="left:403.30px;top:701.87px;font-size:22.3px;line-height:22.3px;color:#000;transform:scaleX(0.8345);">NV004</span>
<span class="t" style="left:503.10px;top:701.87px;font-size:22.3px;line-height:22.3px;color:#000;transform:scaleX(0.8000);">Cao Thị Tố Trinh</span>
<span class="t" style="left:726.60px;top:701.87px;font-size:22.3px;line-height:22.3px;color:#000;transform:scaleX(0.8040);">24 Nguyễn Thị Minh Khai - Q.3</span>
<span class="t" style="left:1083.60px;top:701.87px;font-size:22.3px;line-height:22.3px;color:#000;transform:scaleX(0.8121);">9345882</span>
<span class="t" style="left:1218.20px;top:701.87px;font-size:22.3px;line-height:22.3px;color:#000;transform:scaleX(0.8010);">ctttrinh@yahoo.com</span>
<span class="t" style="left:403.30px;top:728.62px;font-size:22.3px;line-height:22.3px;color:#000;transform:scaleX(0.8345);">NV005</span>
<span class="t" style="left:503.10px;top:728.62px;font-size:22.3px;line-height:22.3px;color:#000;transform:scaleX(0.8000);">Lý Thành</span>
<span class="t" style="left:726.60px;top:728.62px;font-size:22.3px;line-height:22.3px;color:#000;transform:scaleX(0.8100);">123 Trương Định - Quận 3</span>
<span class="t" style="left:1083.60px;top:728.62px;font-size:22.3px;line-height:22.3px;color:#000;transform:scaleX(0.8121);">9321213</span>
<span class="t" style="left:1218.20px;top:728.62px;font-size:22.3px;line-height:22.3px;color:#000;transform:scaleX(0.8007);">lthanh@yahoo.com</span>
<span class="t" style="left:403.30px;top:755.37px;font-size:22.3px;line-height:22.3px;color:#000;transform:scaleX(0.8345);">NV006</span>
<span class="t" style="left:503.10px;top:755.37px;font-size:22.3px;line-height:22.3px;color:#000;transform:scaleX(0.8000);">Trần Thị Mỹ Châu</span>
<span class="t" style="left:726.60px;top:755.37px;font-size:22.3px;line-height:22.3px;color:#000;transform:scaleX(0.7887);">26 Nguyễn Bỉnh Khiêm -Quận 1</span>
<span class="t" style="left:1083.60px;top:755.37px;font-size:22.3px;line-height:22.3px;color:#000;transform:scaleX(0.8096);">0913670277</span>
<span class="t" style="left:403.30px;top:782.12px;font-size:22.3px;line-height:22.3px;color:#000;transform:scaleX(0.8345);">NV007</span>
<span class="t" style="left:503.10px;top:782.12px;font-size:22.3px;line-height:22.3px;color:#000;transform:scaleX(0.8000);">Trần Thị Minh Nguyệt</span>
<span class="t" style="left:726.60px;top:782.12px;font-size:22.3px;line-height:22.3px;color:#000;transform:scaleX(0.8064);">32 Trần Bình Trọng - Quận 5</span>
<span class="t" style="left:444.00px;top:887.72px;font-size:22.3px;line-height:22.3px;color:#000;transform:scaleX(0.7895);">Thêm</span>
<span class="t" style="left:631.40px;top:887.72px;font-size:22.3px;line-height:22.3px;color:#000;transform:scaleX(0.8592);">Xóa</span>
<span class="t" style="left:813.20px;top:887.72px;font-size:22.3px;line-height:22.3px;color:#000;transform:scaleX(0.8198);">Sửa</span>
<span class="t" style="left:998.40px;top:887.72px;font-size:22.3px;line-height:22.3px;color:#aca899;transform:scaleX(0.8097);text-shadow:1.5px 1.5px 0 #fff;">Ghi</span>
<span class="t" style="left:1168.50px;top:887.72px;font-size:22.3px;line-height:22.3px;color:#aca899;transform:scaleX(0.8142);text-shadow:1.5px 1.5px 0 #fff;">Không</span>
<span class="t" style="left:1359.20px;top:887.72px;font-size:22.3px;line-height:22.3px;color:#000;transform:scaleX(0.8066);">Thoát</span>
</div>
</body></html>
